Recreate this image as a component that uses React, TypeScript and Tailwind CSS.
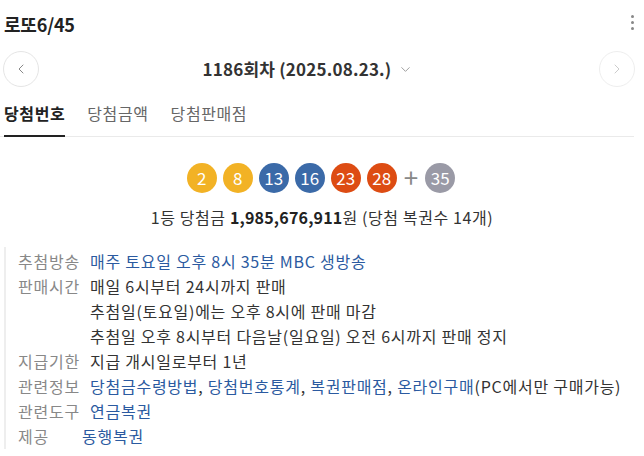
import { ChevronLeft, ChevronRight, ChevronDown } from 'lucide-react';

const balls = [
    { n: 2, c: 'bg-[#f2b225]' },
    { n: 8, c: 'bg-[#f2b225]' },
    { n: 13, c: 'bg-[#3b6aa8]' },
    { n: 16, c: 'bg-[#3b6aa8]' },
    { n: 23, c: 'bg-[#dd4c13]' },
    { n: 28, c: 'bg-[#dd4c13]' },
];

function Ball({ n, c }: { n: number; c: string }) {
    return (
        <div className={`w-[30px] h-[30px] rounded-full ${c} text-white text-[17px] flex items-center justify-center`}>
            {n}
        </div>
    );
}

export default function App() {
    const font = { fontFamily: '"Noto Sans CJK KR", "Noto Sans", sans-serif' };
    return (
        <div className="w-[644px] h-[456px] bg-white overflow-hidden text-[#222]" style={font}>
            {/* header */}
            <div className="flex items-center justify-between h-[48px] pl-[4px]">
                <h1 className="text-[18px] font-bold tracking-[-0.2px]">로또6/45</h1>
                <div className="flex flex-col gap-[3px] pr-[10px] -mt-[4px]">
                    <span className="w-[3px] h-[3px] rounded-full bg-[#888]" />
                    <span className="w-[3px] h-[3px] rounded-full bg-[#888]" />
                    <span className="w-[3px] h-[3px] rounded-full bg-[#888]" />
                </div>
            </div>

            {/* round selector */}
            <div className="flex items-center justify-between h-[42px] pl-[3px] pr-[9px]">
                <button className="w-[36px] h-[36px] rounded-full border border-[#e5e5e5] flex items-center justify-center text-[#888]">
                    <ChevronLeft size={16} strokeWidth={1.5} />
                </button>
                <div className="flex items-center gap-[7px] pr-[22px]">
                    <span className="text-[17px] font-bold text-[#333] tracking-[0.2px]">1186회차 (2025.08.23.)</span>
                    <ChevronDown size={15} strokeWidth={1.5} className="text-[#999]" />
                </div>
                <button className="w-[36px] h-[36px] rounded-full border border-[#eee] flex items-center justify-center text-[#ccc]">
                    <ChevronRight size={16} strokeWidth={1.5} />
                </button>
            </div>

            {/* tabs */}
            <div className="flex items-end gap-[22px] pl-[4px] mr-[10px] h-[47px] border-b border-[#eaeaea] text-[16px] tracking-[0.6px]">
                <div className="font-bold text-[#222] pb-[10px] border-b-2 border-[#222] -mb-px">당첨번호</div>
                <div className="text-[#666] pb-[11px]">당첨금액</div>
                <div className="text-[#666] pb-[11px]">당첨판매점</div>
            </div>

            {/* balls */}
            <div className="flex items-center justify-center gap-[6px] mt-[26px] pr-[2px]">
                {balls.map((b) => (
                    <Ball key={b.n} n={b.n} c={b.c} />
                ))}
                <span className="text-[26px] text-[#888] leading-none px-[1px] -mt-[3px]">+</span>
                <Ball n={35} c="bg-[#9a9aa6]" />
            </div>

            <p className="text-center text-[16px] text-[#333] mt-[12px] tracking-[0.6px]">
                1등 당첨금 <b className="text-[#222] tracking-[0.2px]">1,985,676,911</b>원 (당첨 복권수 14개)
            </p>

            {/* info */}
            <div className="mt-[18px] ml-[4px] border-l-2 border-[#eee] pl-[12px] pt-[2px] text-[16px] leading-[25px] tracking-[0.75px]">
                <div className="flex">
                    <span className="w-[72px] text-[#888] shrink-0">추첨방송</span>
                    <span className="text-[#2b5aa0]">매주 토요일 오후 8시 35분 MBC 생방송</span>
                </div>
                <div className="flex">
                    <span className="w-[72px] text-[#888] shrink-0">판매시간</span>
                    <div className="text-[#333]">
                        <div>매일 6시부터 24시까지 판매</div>
                        <div>추첨일(토요일)에는 오후 8시에 판매 마감</div>
                        <div>추첨일 오후 8시부터 다음날(일요일) 오전 6시까지 판매 정지</div>
                    </div>
                </div>
                <div className="flex">
                    <span className="w-[72px] text-[#888] shrink-0">지급기한</span>
                    <span className="text-[#333]">지급 개시일로부터 1년</span>
                </div>
                <div className="flex">
                    <span className="w-[72px] text-[#888] shrink-0">관련정보</span>
                    <span className="text-[#333]">
                        <span className="text-[#2b5aa0]">당첨금수령방법</span>,{' '}
                        <span className="text-[#2b5aa0]">당첨번호통계</span>,{' '}
                        <span className="text-[#2b5aa0]">복권판매점</span>,{' '}
                        <span className="text-[#2b5aa0]">온라인구매</span>(PC에서만 구매가능)
                    </span>
                </div>
                <div className="flex">
                    <span className="w-[72px] text-[#888] shrink-0">관련도구</span>
                    <span className="text-[#2b5aa0]">연금복권</span>
                </div>
                <div className="flex">
                    <span className="w-[64px] text-[#888] shrink-0">제공</span>
                    <span className="text-[#2b5aa0]">동행복권</span>
                </div>
            </div>
        </div>
    );
}
